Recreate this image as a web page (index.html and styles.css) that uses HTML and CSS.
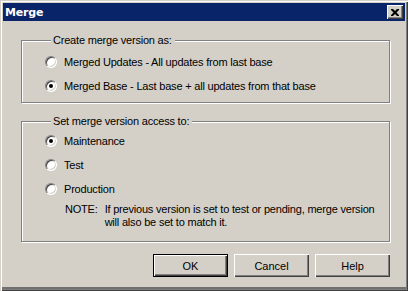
FILE: index.html
```html
<!DOCTYPE html>
<html lang="en">
<head>
  <meta charset="UTF-8" />
  <title>Merge</title>
  <link rel="stylesheet" href="styles.css">
</head>
<body>
  <div class="window">
    <div class="titlebar">
      <span class="title">Merge</span>
      <span class="close">
        <svg width="8" height="7" viewBox="0 0 8 7"><path d="M0 0h2l2 2 2-2h2v1l-2.5 2.5L8 6v1H6L4 5 2 7H0V6l2.5-2.5L0 1z" fill="#000"/></svg>
      </span>
    </div>

    <div class="content">
      <fieldset class="group group-type">
        <legend>Create merge version as:</legend>
        <label class="option"><span class="radio"></span>Merged Updates - All updates from last base</label>
        <label class="option"><span class="radio checked"></span>Merged Base - Last base + all updates from that base</label>
      </fieldset>

      <fieldset class="group group-access">
        <legend>Set merge version access to:</legend>
        <label class="option"><span class="radio checked"></span>Maintenance</label>
        <label class="option"><span class="radio"></span>Test</label>
        <label class="option"><span class="radio"></span>Production</label>
        <div class="note">
          <span class="note-label">NOTE:</span>
          <span>If previous version is set to test or pending, merge version will also be set to match it.</span>
        </div>
      </fieldset>

      <div class="buttons">
        <button class="default">OK</button>
        <button>Cancel</button>
        <button>Help</button>
      </div>
    </div>
  </div>
</body>
</html>
```

FILE: styles.css
```css
:root {
  --face: #d4d0c8;
  --shadow: #808080;
  --dark: #404040;
  --light: #ffffff;
  --title: #0a246a;
}

html, body {
  margin: 0;
  background: var(--face);
}

body {
  font-family: Tahoma, "Liberation Sans", Arial, sans-serif;
  font-size: 11px;
  letter-spacing: -0.2px;
  color: #000;
}

.window {
  width: 408px;
  height: 291px;
  box-sizing: border-box;
  padding: 3px;
  background: var(--face);
  box-shadow: inset 1px 1px 0 var(--face), inset 2px 2px 0 var(--light),
              inset -1px -1px 0 var(--dark), inset -2px -2px 0 var(--shadow),
              inset 0 -4px 0 #707070;
  display: flex;
  flex-direction: column;
}

.titlebar {
  height: 18px;
  background: var(--title);
  display: flex;
  align-items: center;
  justify-content: space-between;
  padding: 0 2px 0 2px;
}

.title {
  color: #fff;
  font-family: "DejaVu Sans", Verdana, sans-serif;
  font-weight: bold;
  font-size: 11px;
  letter-spacing: -0.2px;
}

.close {
  width: 16px;
  height: 14px;
  box-sizing: border-box;
  background: var(--face);
  display: flex;
  align-items: center;
  justify-content: center;
  box-shadow: inset 1px 1px 0 var(--light), inset -1px -1px 0 var(--dark),
              inset -2px -2px 0 var(--shadow);
}

.content {
  flex: 1;
  padding: 13px 15px 0 18px;
  display: flex;
  flex-direction: column;
}

.group {
  margin: 0;
  padding: 0 0 0 23px;
  border: 1px solid var(--shadow);
  box-shadow: 1px 1px 0 var(--light), inset 1px 1px 0 var(--light);
  display: flex;
  flex-direction: column;
}

.group legend {
  padding: 0 3px 0 2px;
  margin-left: 6px;
  line-height: 13px;
  background: var(--face);
}

.group-type {
  padding-top: 3px;
  padding-bottom: 4px;
}

.group-access {
  margin-top: 12px;
  padding-top: 1px;
  padding-bottom: 12px;
}

.option {
  height: 24px;
  display: flex;
  align-items: center;
  gap: 7px;
}

.radio {
  width: 12px;
  height: 12px;
  box-sizing: border-box;
  border-radius: 50%;
  border: 1px solid;
  border-color: var(--shadow) var(--light) var(--light) var(--shadow);
  background: #fff;
  box-shadow: inset 1px 1px 0 var(--dark), inset -1px -1px 0 var(--face);
  display: flex;
  align-items: center;
  justify-content: center;
}

.radio.checked::after {
  content: "";
  width: 4px;
  height: 4px;
  border-radius: 50%;
  background: #000;
}

.note {
  display: flex;
  gap: 7px;
  padding-left: 20px;
  padding-top: 2px;
  line-height: 13px;
}

.note-label {
  flex: none;
}

.buttons {
  margin-top: 12px;
  display: flex;
  justify-content: flex-end;
  gap: 6px;
}

.buttons button {
  width: 75px;
  height: 23px;
  font: inherit;
  color: #000;
  border: none;
  background: var(--face);
  box-shadow: inset 1px 1px 0 var(--light), inset -1px -1px 0 var(--dark),
              inset -2px -2px 0 var(--shadow);
}

.buttons button.default {
  box-shadow: inset 0 0 0 1px #000, inset 2px 2px 0 var(--light),
              inset -2px -2px 0 var(--dark), inset -3px -3px 0 var(--shadow);
}
```
